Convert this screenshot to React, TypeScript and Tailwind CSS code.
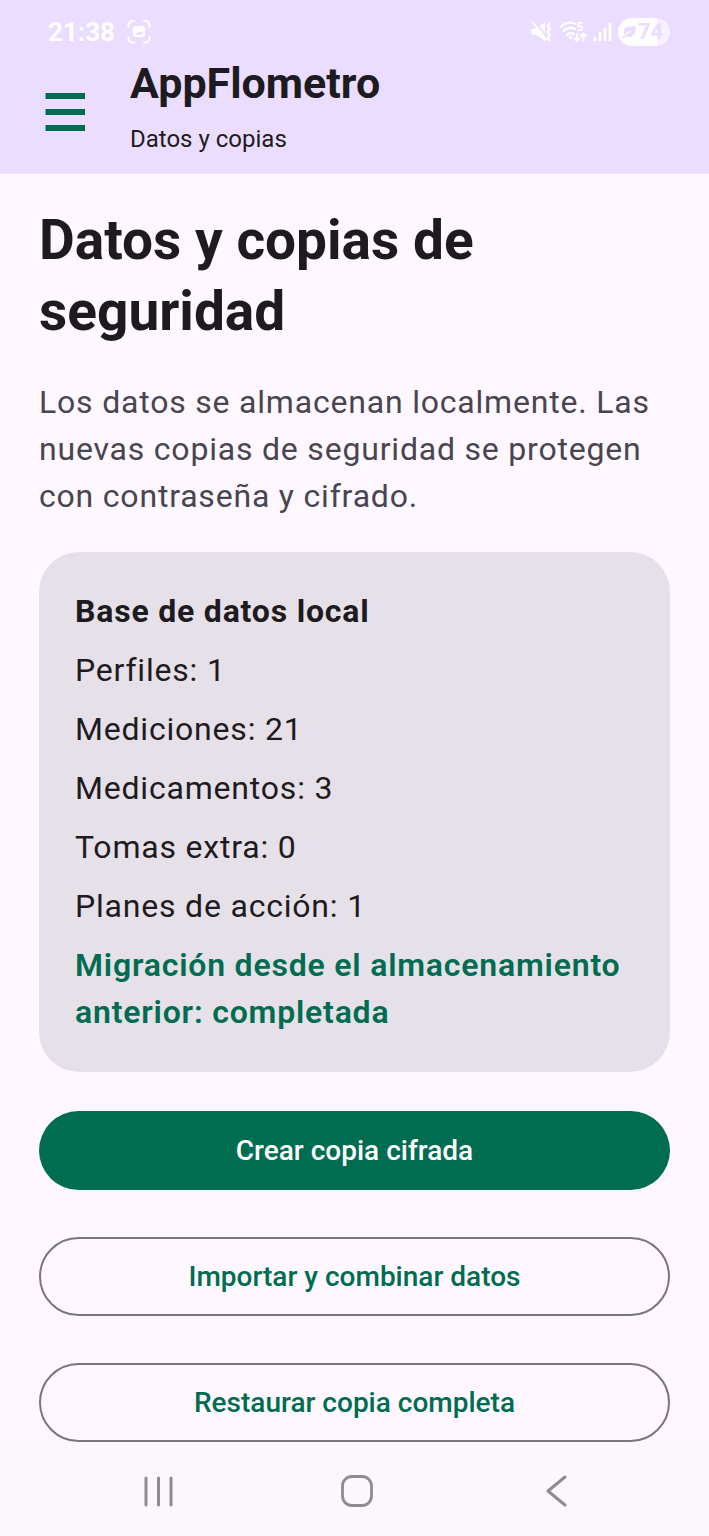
const records = [
    { label: "Perfiles", value: 1 },
    { label: "Mediciones", value: 21 },
    { label: "Medicamentos", value: 3 },
    { label: "Tomas extra", value: 0 },
    { label: "Planes de acción", value: 1 }
];

const ScreenshotIcon = () => (
    <svg width="24" height="24" viewBox="0 0 24 24" fill="none" aria-hidden="true">
        <path
            d="M1.500 7V5a4 4 0 0 1 4-4H7M17 1h1.500a4 4 0 0 1 4 4v2M22.500 17v1.500a4 4 0 0 1-4 4H17M7 22.500H5.500a4 4 0 0 1-4-4V17"
            stroke="white"
            strokeWidth="2"
            strokeLinecap="round"
        />
        <rect x="6" y="6" width="12" height="11" rx="2.500" fill="white" />
        <path d="M8.500 15v-1.500c0-1 1.500-1 2-.5.500-1.500 2-2 2.500-.5 1-1 2.500-.5 2.500 1V15z" fill="#EADDFF" />
    </svg>
);

const MutedIcon = () => (
    <svg width="22" height="22" viewBox="0 0 22 22" fill="none" aria-hidden="true">
        <path d="M1.500 7.500H6L14 1v19l-8-6H1.500A1.200 1.200 0 0 1 .5 13V8.500a1 1 0 0 1 1-1z" fill="white" />
        <path d="M3.500 0l14 18" stroke="#EADDFF" strokeWidth="1.800" />
        <path d="M2 1.500l13 17" stroke="white" strokeWidth="2" strokeLinecap="round" />
        <path d="M18.500 2l-2 3 2.500 3-2.500 3 2.500 3-2 3 1.500 2.500" stroke="white" strokeWidth="2.200" strokeLinecap="round" strokeLinejoin="round" />
    </svg>
);

const WifiIcon = () => (
    <svg width="28" height="22" viewBox="0 0 28 22" fill="none" aria-hidden="true">
        <path d="M1.500 6C5.500 2 11 .8 16 2.700M4.500 10C8 6.500 12 6 16 8M8 13.800c2-2 4.500-2.300 7-.8" stroke="white" strokeWidth="2.200" strokeLinecap="round" />
        <circle cx="11.500" cy="16.500" r="1.900" fill="white" />
        <path d="M23.500 1.800h-4l-.3 3.700c2.800-.8 4.300.2 4.100 2-.2 1.900-2.500 2.300-4.500 1.300" stroke="white" strokeWidth="1.700" />
        <path d="M18 13v7M15.500 17.500l2.500 2.700 2.500-2.700M24.500 19.500v-7M22 15l2.500-2.700L27 15" stroke="white" strokeWidth="1.900" strokeLinecap="round" />
    </svg>
);

const SignalIcon = () => (
    <svg width="19" height="20" viewBox="0 0 19 20" fill="none" aria-hidden="true">
        <path d="M2 16v2" stroke="white" strokeWidth="2.600" strokeLinecap="round" />
        <path d="M7 11v7M12 7v11M17 2v16" stroke="white" strokeWidth="2.600" strokeLinecap="round" />
    </svg>
);

const LeafIcon = () => (
    <svg width="15" height="14" viewBox="0 0 15 14" fill="none" aria-hidden="true">
        <path d="M2 9C1 4 4 1 8 1.500c2 .2 4-.2 5.500-1C14.500 7 12 12 7.500 12 5 12 3 11 2 9z" fill="#EADDFF" />
        <path d="M2.500 11c2-2.500 4-4 7-5" stroke="white" strokeWidth="1.300" />
        <path d="M.5 13c1-.5 2-1.500 3-3" stroke="#EADDFF" strokeWidth="1.500" />
    </svg>
);

const StatusBar = () => (
    <div className="flex h-14 items-center justify-between pl-12 pr-[39px] pt-[7px] text-white">
        <div className="flex items-center gap-3">
            <span className="text-[26px] leading-7 font-bold">21:38</span>
            <ScreenshotIcon />
        </div>
        <div className="flex items-center gap-1.5">
            <MutedIcon />
            <WifiIcon />
            <SignalIcon />
            <div className="flex h-7 w-[52px] items-center gap-px rounded-full bg-linear-to-r from-white from-75% to-white/60 to-75% pl-1 text-[#EADDFF]">
                <LeafIcon />
                <span className="text-[22px] leading-7 font-bold">74</span>
            </div>
        </div>
    </div>
);

const Header = () => (
    <header className="bg-[#EADDFF] pb-[19px]">
        <StatusBar />
        <div className="flex items-end gap-8">
            <button type="button" aria-label="Abrir menú" className="mb-[19px] ml-10 flex h-12 w-[50px] items-center justify-center">
                <svg width="40" height="38" viewBox="0 0 40 38" aria-hidden="true">
                    <path d="M.5 0h39.500v6H.5zM.5 16h39.500v6H.5zM.5 32h39.500v6H.5z" fill="#006C50" />
                </svg>
            </button>
            <div className="flex flex-col gap-3 pl-2">
                <p className="text-[43px] leading-[55px] font-bold">AppFlometro</p>
                <p className="text-[24px] leading-8">Datos y copias</p>
            </div>
        </div>
    </header>
);

const SystemNav = () => (
    <nav className="mt-auto grid h-[94px] grid-cols-3 items-center justify-items-center bg-[#FBF8FD] pl-[58px] pr-[54px] pt-[3px]">
        <button type="button" aria-label="Recientes">
            <svg width="32" height="32" viewBox="0 0 32 32" fill="none" stroke="#8E8C90" strokeWidth="3" strokeLinecap="round" aria-hidden="true">
                <path d="M4 3v27M16.500 3v27M29 3v27" />
            </svg>
        </button>
        <button type="button" aria-label="Inicio">
            <svg width="32" height="32" viewBox="0 0 32 32" fill="none" stroke="#8E8C90" strokeWidth="2.800" aria-hidden="true">
                <rect x="1.500" y="1.500" width="29" height="29" rx="9.500" />
            </svg>
        </button>
        <button type="button" aria-label="Atrás">
            <svg width="32" height="32" viewBox="0 0 32 32" fill="none" stroke="#8E8C90" strokeWidth="3" strokeLinecap="round" strokeLinejoin="round" aria-hidden="true">
                <path d="M25 2L8 16l17 14" />
            </svg>
        </button>
    </nav>
);

const App = () => {
    return (
        <div className="flex min-h-screen flex-col bg-[#FEF7FF] font-['Roboto',sans-serif] text-[#1D1B20]">
            <Header />

            <main className="px-[39px] pt-[31px]">
                <h1 className="text-[55px] leading-[71px] font-bold">Datos y copias de seguridad</h1>
                <p className="mt-8 text-[32px] leading-[47px] tracking-wide text-[#49454F]">
                    Los datos se almacenan localmente. Las nuevas copias de seguridad se protegen con contraseña y cifrado.
                </p>

                {/* Local database summary */}
                <section className="mt-8 flex flex-col gap-3 rounded-[40px] bg-[#E6E0E9] p-9 text-[32px] leading-[47px] tracking-wide">
                    <h2 className="font-bold">Base de datos local</h2>
                    {records.map((record) => (
                        <p key={record.label}>
                            {record.label}: {record.value}
                        </p>
                    ))}
                    <p className="font-semibold text-[#006C50]">Migración desde el almacenamiento anterior: completada</p>
                </section>

                <div className="mt-[39px] flex flex-col gap-[47px] text-[28px] leading-10 font-medium">
                    <button type="button" className="h-[79px] rounded-full bg-[#006C50] text-white">
                        Crear copia cifrada
                    </button>
                    <button type="button" className="h-[79px] rounded-full border-2 border-[#79747E] text-[#006C50]">
                        Importar y combinar datos
                    </button>
                    <button type="button" className="h-[79px] rounded-full border-2 border-[#79747E] text-[#006C50]">
                        Restaurar copia completa
                    </button>
                </div>
            </main>

            <SystemNav />
        </div>
    );
};

export default App;
